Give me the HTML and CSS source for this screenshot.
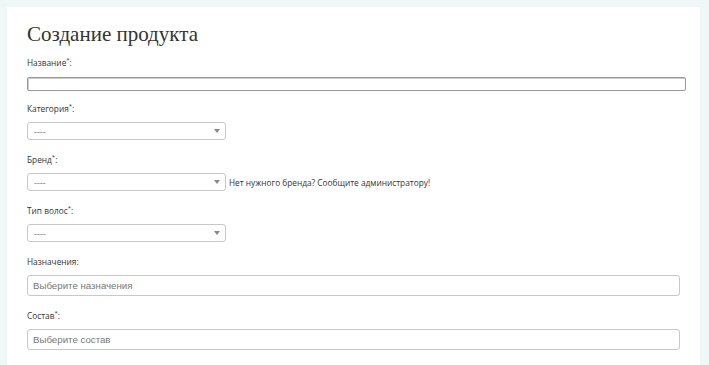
FILE: index.html
```html
<!DOCTYPE html>
<html lang="ru">
<head>
    <meta charset="UTF-8">
    <meta name="viewport" content="width=device-width, initial-scale=1.0">
    <title>Создание продукта</title>
    <link rel="stylesheet" href="styles.css">
</head>
<body>

    <div class="card">
        <h1>Создание продукта</h1>
        <form class="form">
            <div class="field">
                <label>Название<sup>*</sup>:</label>
                <input type="text" class="text-input">
            </div>
            <div class="field">
                <label>Категория<sup>*</sup>:</label>
                <div class="select"><span>----</span><i class="arrow"></i></div>
            </div>
            <div class="field">
                <label>Бренд<sup>*</sup>:</label>
                <div class="row">
                    <div class="select"><span>----</span><i class="arrow"></i></div>
                    <span class="hint">Нет нужного бренда? Сообщите администратору!</span>
                </div>
            </div>
            <div class="field">
                <label>Тип волос<sup>*</sup>:</label>
                <div class="select"><span>----</span><i class="arrow"></i></div>
            </div>
            <div class="field">
                <label>Назначения:</label>
                <div class="multi">Выберите назначения</div>
            </div>
            <div class="field">
                <label>Состав<sup>*</sup>:</label>
                <div class="multi">Выберите состав</div>
            </div>
        </form>
    </div>

</body>
</html>
```

FILE: styles.css
```css
body {
    margin: 0;
    background: #eff8f6;
    font-family: "Open Sans", Arial, sans-serif;
    color: #333;
}
.card {
    margin: 7px 9px 0 7px;
    padding: 14px 20px 20px 20px;
    background: #fff;
    height: 340px;
}
h1 {
    margin: 0;
    font-family: "Liberation Serif", Georgia, serif;
    font-weight: normal;
    font-size: 21px;
    line-height: 26px;
    color: #333;
}
.form {
    display: flex;
    flex-direction: column;
    gap: 14px;
    margin-top: 10px;
}
.field {
    display: flex;
    flex-direction: column;
    gap: 7px;
}
.field:first-child {
    margin-bottom: -2px;
}
.field label {
    font-size: 8.3px;
    line-height: 12px;
    color: #333;
}
.field sup {
    font-size: 6px;
    vertical-align: top;
    line-height: 6px;
}
.text-input {
    box-sizing: border-box;
    width: 659px;
    height: 14px;
    margin: 1px 0 0 0;
    padding: 0;
    border: 1px solid #999;
    border-radius: 2px;
    box-shadow: inset 1px 1px 0 #ccc;
}
.row {
    display: flex;
    align-items: center;
    gap: 3px;
}
.select {
    box-sizing: border-box;
    width: 199px;
    height: 18px;
    border: 1px solid #c8c8c8;
    border-radius: 3px;
    display: flex;
    align-items: center;
    justify-content: space-between;
    padding: 0 5px 0 6px;
    font-size: 9px;
    color: #777;
}
.arrow {
    width: 0;
    height: 0;
    border-left: 3px solid transparent;
    border-right: 3px solid transparent;
    border-top: 4px solid #888;
}
.hint {
    font-size: 8.3px;
    color: #333;
}
.multi {
    box-sizing: border-box;
    width: 653px;
    height: 21px;
    border: 1px solid #c8c8c8;
    border-radius: 3px;
    padding: 0 5px;
    display: flex;
    align-items: center;
    font-family: "Liberation Sans", Arial, sans-serif;
    font-size: 9.7px;
    color: #777;
}
```
